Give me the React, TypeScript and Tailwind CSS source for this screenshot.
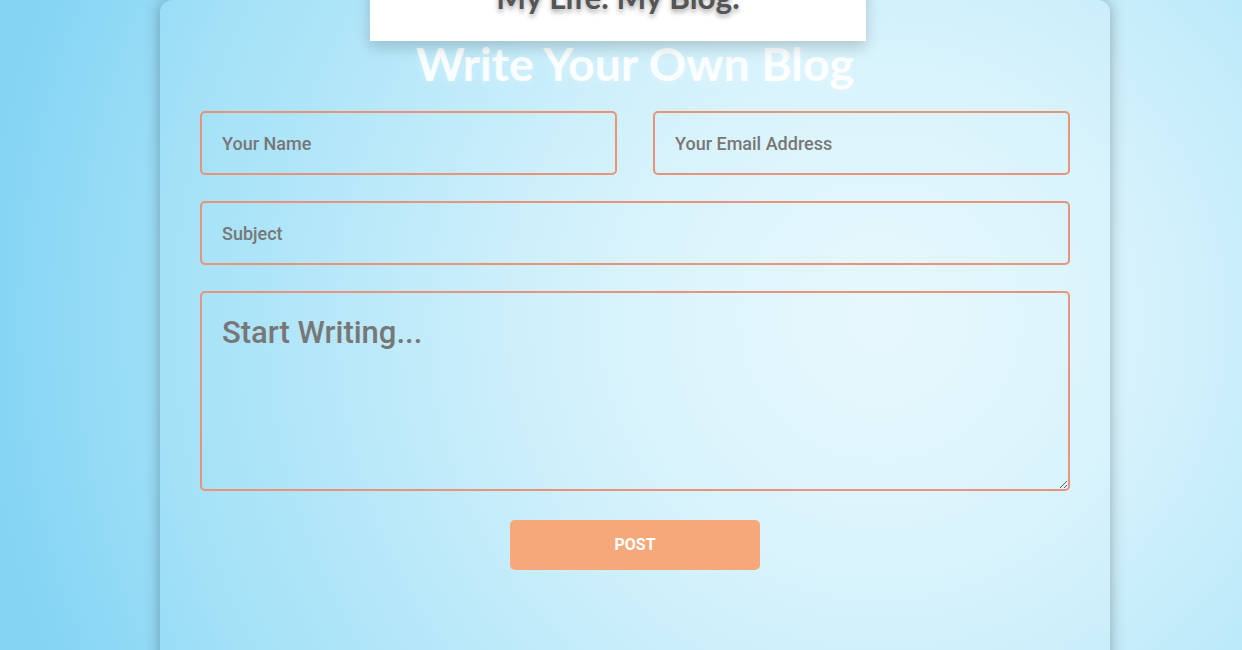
import React from "react";

export default function App() {
  return (
    <div className="h-[650px] w-full overflow-hidden bg-[radial-gradient(circle_900px_at_880px_320px,#e6f8fd_0px,#d6f2fc_260px,#c4ecfa_420px,#b4e7f9_540px,#9edff7_720px,#84d4f4_900px)] font-['Roboto',sans-serif]">
      <div className="relative ml-[160px] w-[950px] h-[700px] rounded-t-[12px] bg-white/5 shadow-[0_0_16px_rgba(0,0,0,0.3)] px-10 pt-[40px]">
        <div className="absolute left-[210px] top-[-39px] w-[496px] h-[80px] bg-white shadow-[0_6px_14px_rgba(0,0,0,0.18)] flex items-end justify-center pb-[28px]">
          <span className="font-['Lato',sans-serif] font-bold text-[31.5px] leading-none text-[#555] [text-shadow:0_3px_5px_rgba(0,0,0,0.35)]">
            My Life. My Blog.
          </span>
        </div>
        <h1 className="text-center font-['Lato',sans-serif] font-bold text-[46.5px] leading-none text-white/90 [text-shadow:0_2px_8px_rgba(255,255,255,0.3)]">
          Write Your Own Blog
        </h1>
        <form className="mt-[24.5px] flex flex-col" onSubmit={(e) => e.preventDefault()}>
          <div className="grid grid-cols-2 gap-9">
            <input
              className="h-[64px] w-full rounded-[5px] border-2 border-[#e8937b] bg-transparent px-5 text-[18px] font-medium text-[#555] placeholder:text-[#777] outline-none"
              placeholder="Your Name"
            />
            <input
              className="h-[64px] w-full rounded-[5px] border-2 border-[#e8937b] bg-transparent px-5 text-[18px] font-medium text-[#555] placeholder:text-[#777] outline-none"
              placeholder="Your Email Address"
            />
          </div>
          <input
            className="mt-[26px] h-[64px] w-full rounded-[5px] border-2 border-[#e8937b] bg-transparent px-5 text-[18px] font-medium text-[#555] placeholder:text-[#777] outline-none"
            placeholder="Subject"
          />
          <textarea
            className="mt-[26px] h-[200px] w-full rounded-[5px] border-2 border-[#e8937b] bg-transparent px-5 pt-[17px] text-[31px] font-medium text-[#555] placeholder:text-[#777] outline-none"
            placeholder="Start Writing..."
          />
          <button
            type="submit"
            className="mx-auto mt-[29px] h-[50px] w-[250px] rounded-[5px] bg-[#f5a87a] text-[16px] font-bold text-white"
          >
            POST
          </button>
        </form>
      </div>
    </div>
  );
}
